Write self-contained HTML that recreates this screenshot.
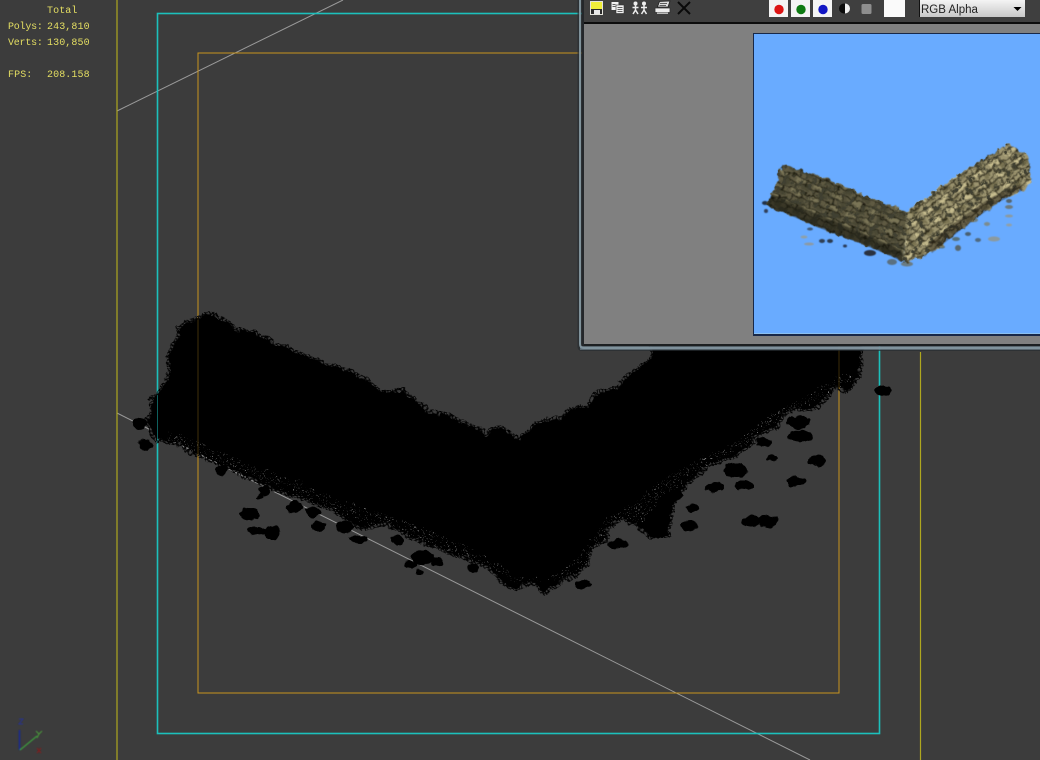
<!DOCTYPE html>
<html><head><meta charset="utf-8"><style>
html,body{margin:0;padding:0;background:#3c3c3c}
body{width:1040px;height:760px;overflow:hidden;position:relative}
svg{position:absolute;left:0;top:0;display:block}
.h{font-family:"Liberation Mono",monospace;font-size:10px;fill:#e4de62;letter-spacing:.1px}
</style></head><body>
<svg width="1040" height="760" viewBox="0 0 1040 760" xmlns="http://www.w3.org/2000/svg">
<defs>
<pattern id="mesh" width="5" height="4" patternUnits="userSpaceOnUse" patternTransform="rotate(25)">
<path d="M0 2L2.500 0L5 2L2.500 4Z" fill="none" stroke="#000" stroke-width="1.100"/>
</pattern>
<pattern id="brickL" width="16" height="10" patternUnits="userSpaceOnUse" patternTransform="rotate(23) scale(1.250)">
<rect width="16" height="10" fill="#5e5a43"/>
<rect x="1" y="1" width="9" height="3" fill="#7a7556"/>
<rect x="9" y="6" width="6" height="3" fill="#4c4936"/>
<path d="M0 .5H16M0 5.500H16M11 0V5M4 5V10" stroke="#1d1b11" stroke-width="1"/>
</pattern>
<pattern id="brickR" width="16" height="10" patternUnits="userSpaceOnUse" patternTransform="rotate(-36) scale(1.250)">
<rect width="16" height="10" fill="#9c9470"/>
<rect x="1" y="1" width="9" height="3" fill="#c6bc8e"/>
<rect x="9" y="6" width="6" height="3" fill="#7c7553"/>
<path d="M0 .5H16M0 5.500H16M11 0V5M4 5V10" stroke="#2c2818" stroke-width="1"/>
</pattern>
<filter id="spk" x="0" y="0" width="100%" height="100%">
<feTurbulence type="fractalNoise" baseFrequency=".85" numOctaves="2" seed="4" result="n"/>
<feColorMatrix in="n" type="matrix" values="0 0 0 0 .3  0 0 0 0 .3  0 0 0 0 .3  9 0 0 0 -6"/>
<feComposite in2="SourceAlpha" operator="in"/>
</filter>
<filter id="rough" x="-5%" y="-5%" width="110%" height="110%">
<feTurbulence type="fractalNoise" baseFrequency=".12" numOctaves="2" seed="3" result="n"/>
<feDisplacementMap in="SourceGraphic" in2="n" scale="7" xChannelSelector="R" yChannelSelector="G"/>
</filter>
<filter id="stone" x="-5%" y="-5%" width="110%" height="110%">
<feTurbulence type="fractalNoise" baseFrequency=".16" numOctaves="3" seed="9" result="n"/>
<feDisplacementMap in="SourceGraphic" in2="n" scale="7" xChannelSelector="R" yChannelSelector="G" result="d"/>
<feColorMatrix in="n" type="matrix" values="0 0 0 0 .05  0 0 0 0 .05  0 0 0 0 .03  4 0 0 0 -1.800" result="c"/>
<feComposite in="c" in2="d" operator="in" result="sh"/>
<feGaussianBlur in="d" stdDeviation=".6" result="db"/>
<feMerge><feMergeNode in="db"/><feMergeNode in="sh"/></feMerge>
</filter>
<filter id="b2"><feGaussianBlur stdDeviation=".4"/></filter>
<clipPath id="prev"><rect x="754" y="34" width="286" height="300"/></clipPath>
<clipPath id="wc"><path d="M180 333L180 327L197 320L208 314L230 323L235 331L253 332L275 345L278 345L327 365L353 373L380 392L403 392L430 413L450 417L487 435L497 428L520 440L533 427L542 421L560 419L570 410L588 407L597 393L617 388L632 372L652 360L653 340L860 340L860 352L858 377L847 390L830 388L823 400L810 410L793 408L782 415L777 425L757 435L750 443L737 455L707 465L697 475L683 487L672 505L668 535L648 535L633 522L622 517L607 527L605 540L587 550L588 563L577 573L557 583L543 592L530 580L517 588L503 583L490 567L453 553L437 547L413 537L387 523L360 527L333 510L310 500L277 490L233 470L200 455L177 443L157 440L152 433L147 420L153 413L152 400L163 390L170 373L169 357Z"/></clipPath>
<path id="wall" d="M180 333L180 327L197 320L208 314L230 323L235 331L253 332L275 345L278 345L327 365L353 373L380 392L403 392L430 413L450 417L487 435L497 428L520 440L533 427L542 421L560 419L570 410L588 407L597 393L617 388L632 372L652 360L653 340L860 340L860 352L858 377L847 390L830 388L823 400L810 410L793 408L782 415L777 425L757 435L750 443L737 455L707 465L697 475L683 487L672 505L668 535L648 535L633 522L622 517L607 527L605 540L587 550L588 563L577 573L557 583L543 592L530 580L517 588L503 583L490 567L453 553L437 547L413 537L387 523L360 527L333 510L310 500L277 490L233 470L200 455L177 443L157 440L152 433L147 420L153 413L152 400L163 390L170 373L169 357Z"/>
<linearGradient id="dd" x1="0" y1="0" x2="0" y2="1"><stop offset="0" stop-color="#f4f4f4"/><stop offset="1" stop-color="#c8c8c8"/></linearGradient>
</defs>

<rect width="1040" height="760" fill="#3c3c3c"/>

<!-- grid axis lines -->
<path d="M117 111L343 0M117 413L810 760" stroke="#9a9a9a" stroke-width="1" fill="none"/>

<!-- safe frames -->
<path d="M117 0V760M920.500 352V760" stroke="#aea71f" stroke-width="1.200" fill="none"/>
<rect x="157.500" y="13.500" width="722" height="720" fill="none" stroke="#1cc0bc" stroke-width="1.600"/>
<rect x="198" y="53" width="641" height="640" fill="none" stroke="#c8941e" stroke-width="1"/>

<!-- mesh -->
<g filter="url(#rough)">
<use href="#wall" fill="#000"/>
<use href="#wall" fill="none" stroke="url(#mesh)" stroke-width="6"/>
<g clip-path="url(#wc)">
<path d="M170 428L200 442L250 465L300 482L340 500L395 518L430 530L480 552L515 575L545 580L575 560L595 535L610 515L640 500L660 480L690 462L730 445L770 415L820 388L850 370L853 382L820 398L780 420L745 445L700 472L665 497L640 525L600 552L570 578L520 585L490 566L430 545L360 522L300 497L230 467L165 438Z" filter="url(#spk)"/>
</g>
<g fill="#030303">
<ellipse cx="140" cy="424" rx="7" ry="5"/><ellipse cx="145" cy="445" rx="7" ry="5"/>
<ellipse cx="222" cy="470" rx="6" ry="5"/><ellipse cx="265" cy="491" rx="6" ry="5"/><ellipse cx="260" cy="497" rx="4" ry="3"/>
<ellipse cx="250" cy="514" rx="10" ry="6"/><ellipse cx="258" cy="531" rx="9" ry="4"/><ellipse cx="273" cy="533" rx="8" ry="7"/>
<ellipse cx="295" cy="507" rx="9" ry="6"/><ellipse cx="313" cy="512" rx="7" ry="5"/><ellipse cx="319" cy="526" rx="7" ry="5"/>
<ellipse cx="345" cy="527" rx="10" ry="6"/><ellipse cx="359" cy="539" rx="9" ry="4"/><ellipse cx="397" cy="540" rx="6" ry="5"/>
<ellipse cx="423" cy="557" rx="11" ry="7"/><ellipse cx="437" cy="562" rx="7" ry="5"/><ellipse cx="411" cy="564" rx="7" ry="4"/><ellipse cx="419" cy="572" rx="4" ry="3"/>
<ellipse cx="473" cy="568" rx="6" ry="5"/>
<ellipse cx="798" cy="422" rx="11" ry="7"/><ellipse cx="800" cy="436" rx="12" ry="6"/><ellipse cx="764" cy="443" rx="8" ry="5"/>
<ellipse cx="773" cy="458" rx="6" ry="3"/><ellipse cx="817" cy="461" rx="9" ry="5"/><ellipse cx="736" cy="470" rx="12" ry="7"/>
<ellipse cx="745" cy="485" rx="10" ry="5"/><ellipse cx="796" cy="481" rx="10" ry="5"/><ellipse cx="715" cy="487" rx="9" ry="5"/>
<ellipse cx="672" cy="496" rx="11" ry="6"/><ellipse cx="692" cy="508" rx="7" ry="5"/><ellipse cx="751" cy="521" rx="9" ry="6"/><ellipse cx="768" cy="521" rx="10" ry="6"/>
<ellipse cx="689" cy="526" rx="9" ry="5"/><ellipse cx="642" cy="526" rx="6" ry="3"/><ellipse cx="658" cy="532" rx="8" ry="6"/>
<ellipse cx="617" cy="544" rx="10" ry="5"/><ellipse cx="583" cy="584" rx="8" ry="5"/><ellipse cx="883" cy="391" rx="8.500" ry="4.500"/>
</g>
</g>
<!-- frame lines faintly through the mesh -->
<g clip-path="url(#wc)" fill="none" stroke-width="1">
<path d="M157.500 300V460" stroke="#1cc0bc" opacity=".5"/>
<path d="M198 300V470" stroke="#c8941e" opacity=".32"/>
<path d="M839 340V400" stroke="#c8941e" opacity=".3"/>
</g>

<!-- stats -->
<text class="h" x="47" y="13">Total</text>
<text class="h" x="8" y="29" textLength="35">Polys:</text><text class="h" x="47" y="29">243,810</text>
<text class="h" x="8" y="45" textLength="35">Verts:</text><text class="h" x="47" y="45">130,850</text>
<text class="h" x="8" y="77">FPS:</text><text class="h" x="47" y="77">208.158</text>

<!-- gizmo -->
<g filter="url(#b2)">
<path d="M19.500 730V750" stroke="#1a2a90" stroke-width="1.500"/>
<path d="M20 750L37 736" stroke="#3c9a3c" stroke-width="1.200"/>
<path d="M19 719h4l-4 5h4" stroke="#26308c" stroke-width="1" fill="none"/>
<path d="M36 731l3 3l3-3M39 734l-2 4" stroke="#4a9a3a" stroke-width="1" fill="none"/>
<path d="M37 748l4 5M41 748l-4 5" stroke="#7a2020" stroke-width="1.200" fill="none"/>
</g>

<!-- window frame -->
<rect x="577.500" y="-5" width="480" height="356" rx="4" fill="#262c30" opacity=".7"/>
<path d="M580 0V344Q580 348 584 348H1040" fill="none" stroke="#8fa3ad" stroke-width="2" opacity=".85"/>
<rect x="582" y="0" width="458" height="346" fill="#24272a"/>
<rect x="584" y="0" width="456" height="22" fill="#3f3f3f"/>
<rect x="584" y="22" width="456" height="2" fill="#0c0c0c"/>
<rect x="584" y="24" width="456" height="320" fill="#808080"/>
<rect x="753" y="33" width="287" height="303" fill="#182848"/>
<rect x="754" y="34" width="286" height="300" fill="#69abff"/>
<rect x="754" y="333" width="286" height="1" fill="#8cc0f0"/>

<!-- toolbar icons -->
<g>
<rect x="590.500" y="1.500" width="12" height="13" fill="#f0ee38" stroke="#e4e4dc" stroke-width="1"/>
<rect x="591" y="9" width="11" height="5" fill="#2a2a2a"/>
<rect x="594" y="10" width="6" height="4" fill="#e8e8e8"/>
<rect x="611.500" y="2" width="7" height="8" fill="#f2f2f2"/>
<rect x="616" y="5" width="8" height="8.500" fill="#f2f2f2" stroke="#333" stroke-width=".6"/>
<path d="M612.500 4.500h3M612.500 6.500h3M617.500 7.500h5M617.500 9.500h5M617.500 11.500h5" stroke="#333" stroke-width=".8"/>
<g fill="#eee" stroke="#eee">
<circle cx="635.500" cy="3.500" r="2" stroke="none"/><circle cx="644" cy="3.500" r="2" stroke="none"/>
<path d="M635.500 5V10M632.500 7.500H638.500M633 14L635.500 10L638 14M644 5V10M641 7.500H647M641.500 14L644 10L646.500 14" fill="none" stroke-width="1.500"/>
</g>
<path d="M659.500 1.500L670 1L668 7H657.500Z" fill="#ddd" stroke="#222" stroke-width=".8"/>
<path d="M655 8H670V12.500H655Z" fill="#eee" stroke="#333" stroke-width=".8"/>
<path d="M660 3.500H667M659.500 5.500H666" stroke="#333" stroke-width=".7"/>
<rect x="657" y="12.500" width="11" height="1.500" fill="#bbb"/>
<path d="M678 2L690 14M690 2L678 14" stroke="#0a0a0a" stroke-width="2" fill="none"/>
<rect x="769" y="0" width="19" height="17" fill="#f4f4f4"/><circle cx="779" cy="9.500" r="4.700" fill="#dc1414"/>
<rect x="791" y="0" width="19" height="17" fill="#f4f4f4"/><circle cx="801" cy="9.500" r="4.700" fill="#0e7a12"/>
<rect x="813" y="0" width="19" height="17" fill="#f4f4f4"/><circle cx="823" cy="9.500" r="4.700" fill="#1216c4"/>
<circle cx="844" cy="8.500" r="5" fill="#0a0a0a"/><path d="M845 3.500A5 5 0 0 1 845 13.500Z" fill="#eee"/>
<rect x="861.500" y="4" width="10" height="10" rx="1.500" fill="#8e8e8e"/>
<rect x="884" y="0" width="21" height="17" fill="#fafafa"/>
</g>
<rect x="919" y="0" width="106" height="17" fill="url(#dd)"/>
<rect x="919" y="0" width="1" height="17" fill="#111"/>
<text x="921" y="13" font-family="'Liberation Sans',sans-serif" font-size="11.500" fill="#222">RGB Alpha</text>
<path d="M1013.500 7H1021.500L1017.500 11Z" fill="#000"/>

<!-- render preview -->
<g clip-path="url(#prev)">
<g filter="url(#b2)">
<ellipse cx="765" cy="203" rx="3" ry="2" fill="#20304a"/><ellipse cx="766" cy="211" rx="2" ry="2" fill="#30415c"/>
<ellipse cx="810" cy="229" rx="3" ry="1.500" fill="#3f5a78"/><ellipse cx="804" cy="237" rx="3.500" ry="1.500" fill="#8fa0a8"/><ellipse cx="809" cy="244" rx="5" ry="1.500" fill="#8c9aa4"/>
<ellipse cx="822" cy="241" rx="3" ry="2" fill="#2f3f55"/><ellipse cx="830" cy="241" rx="3" ry="2" fill="#2a3a50"/><ellipse cx="845" cy="246" rx="2" ry="1.500" fill="#2a3a58"/><ellipse cx="845" cy="236" rx="2" ry="1.500" fill="#2f4058"/>
<ellipse cx="870" cy="253" rx="6" ry="3" fill="#2b3340"/><ellipse cx="892" cy="262" rx="5" ry="3" fill="#5a7080"/><ellipse cx="907" cy="264" rx="6" ry="2.500" fill="#6a7c84"/>
<ellipse cx="956" cy="239" rx="4" ry="2" fill="#55707a"/><ellipse cx="978" cy="240" rx="3" ry="2" fill="#4f6a80"/><ellipse cx="994" cy="239" rx="6" ry="2.500" fill="#8b9a9f"/>
<ellipse cx="975" cy="220" rx="3" ry="2" fill="#6c8088"/><ellipse cx="987" cy="224" rx="3" ry="2" fill="#7c8c90"/><ellipse cx="1009" cy="216" rx="4" ry="1.500" fill="#8a9aa0"/><ellipse cx="1009" cy="207" rx="4" ry="2" fill="#6c7a80"/><ellipse cx="1009" cy="201" rx="3" ry="2" fill="#55656e"/><ellipse cx="1009" cy="225" rx="3" ry="1.500" fill="#90a0a8"/>
<ellipse cx="958" cy="248" rx="3" ry="3" fill="#58686f"/><ellipse cx="968" cy="234" rx="3" ry="2" fill="#4a6072"/><ellipse cx="942" cy="247" rx="3" ry="1.500" fill="#55707f"/>
</g>
<g filter="url(#stone)">
<path d="M782 165L817 175L860 193L907 212L903 262L893 257L860 243L817 227L767 205L775 187Z" fill="url(#brickL)"/>
<path d="M907 212L957 175L997 150L1007 144L1027 155L1032 183L1023 190L997 203L963 228L932 253L907 262L903 262Z" fill="url(#brickR)"/>
</g>
<path d="M767 205L817 227L860 243L893 257L903 262L901 250L860 232L817 214L772 194Z" fill="#14140c" opacity=".5" filter="url(#b2)"/>
<path d="M932 253L963 228L997 203L1023 190L1020 184L990 198L955 222L928 244Z" fill="#1a180e" opacity=".4" filter="url(#b2)"/>
</g>

<!-- bottom border over mesh (semi-transparent glass) -->
<rect x="584" y="344" width="456" height="2" fill="#1d2022"/>
<rect x="580" y="346" width="460" height="4" fill="#7f93a0" opacity=".55"/>
<rect x="584" y="336" width="170" height="8" fill="#808080"/>
</svg>
</body></html>
